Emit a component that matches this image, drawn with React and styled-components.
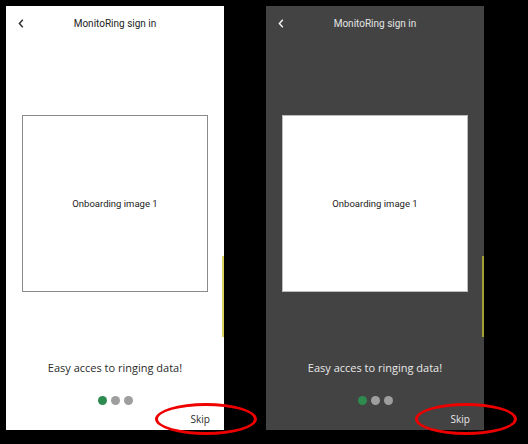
import React from 'react'
import styled, { createGlobalStyle } from 'styled-components'

const GlobalStyle = createGlobalStyle`
  html, body {
    margin: 0;
    padding: 0;
    background: #000;
  }
  body {
    width: 528px;
    height: 444px;
    overflow: hidden;
  }
`

const themes = {
  light: {
    bg: '#ffffff',
    title: '#222222',
    text: '#2a2a2a',
    chevron: '#333333',
    boxBg: '#ffffff',
    boxBorder: '#8a8a8a',
    boxText: '#222222',
    edge: 'rgba(205, 195, 40, 0.75)',
  },
  dark: {
    bg: '#434343',
    title: '#e4e4e4',
    text: '#e8e8e8',
    chevron: '#f0f0f0',
    boxBg: '#ffffff',
    boxBorder: '#bdbdbd',
    boxText: '#222222',
    edge: 'rgba(205, 195, 40, 0.7)',
  },
}

const Stage = styled.div`
  display: flex;
  gap: 42px;
  padding: 6px 0 0 6px;
  height: 444px;
  box-sizing: border-box;
`

const Phone = styled.div`
  position: relative;
  width: 218px;
  height: 424px;
  background: ${(p) => p.$t.bg};
  display: flex;
  flex-direction: column;
  align-items: center;
`

const Header = styled.div`
  width: 100%;
  height: 34px;
  display: grid;
  grid-template-columns: 30px 1fr 30px;
  align-items: center;
`

const Back = styled.svg`
  justify-self: start;
  margin-left: 12px;
  margin-top: 1px;
`

const Title = styled.div`
  text-align: center;
  font-family: Roboto, 'Liberation Sans', sans-serif;
  font-size: 10px;
  color: ${(p) => p.$t.title};
  margin-top: 1px;
`

const ImageBox = styled.div`
  margin-top: 75px;
  width: 186px;
  height: 177px;
  box-sizing: border-box;
  background: ${(p) => p.$t.boxBg};
  border: 1px solid ${(p) => p.$t.boxBorder};
  display: flex;
  align-items: center;
  justify-content: center;
  font-family: Roboto, 'Liberation Sans', sans-serif;
  font-size: 9.5px;
  color: ${(p) => p.$t.boxText};
`

const Caption = styled.div`
  margin-top: 68px;
  height: 16px;
  line-height: 16px;
  font-family: 'Open Sans', 'Noto Sans', sans-serif;
  font-size: 11px;
  color: ${(p) => p.$t.text};
`

const Dots = styled.div`
  margin-top: 20px;
  display: flex;
  gap: 4px;
`

const Dot = styled.span`
  width: 9px;
  height: 9px;
  border-radius: 50%;
  background: ${(p) => (p.$active ? '#2e8b4f' : '#9e9e9e')};
`

const SkipRow = styled.div`
  width: 100%;
  margin-top: 7px;
  display: flex;
  justify-content: flex-end;
  padding-right: 14px;
  box-sizing: border-box;
`

const Skip = styled.div`
  font-family: 'Open Sans', 'Noto Sans', sans-serif;
  font-size: 10px;
  line-height: 14px;
  color: ${(p) => p.$t.text};
`

const EdgeMark = styled.div`
  position: absolute;
  right: 0;
  top: 250px;
  width: 2px;
  height: 81px;
  background: ${(p) => p.$t.edge};
`

const Ring = styled.div`
  position: absolute;
  left: 149px;
  top: 397px;
  width: 96px;
  height: 26px;
  border: 3.5px solid #ee0000;
  border-radius: 50%;
  pointer-events: none;
`

function Screen({ mode }) {
  const t = themes[mode]
  return (
    <Phone $t={t}>
      <Header>
        <Back width="6" height="9" viewBox="0 0 6 9">
          <path d="M4.8 0.8 L1.4 4.5 L4.8 8.2" fill="none" stroke={t.chevron} strokeWidth="1.5" />
        </Back>
        <Title $t={t}>MonitoRing sign in</Title>
        <span />
      </Header>
      <ImageBox $t={t}>Onboarding image 1</ImageBox>
      <Caption $t={t}>Easy acces to ringing data!</Caption>
      <Dots>
        <Dot $active />
        <Dot />
        <Dot />
      </Dots>
      <SkipRow>
        <Skip $t={t}>Skip</Skip>
      </SkipRow>
      <EdgeMark $t={t} />
      <Ring />
    </Phone>
  )
}

export default function App() {
  return (
    <>
      <GlobalStyle />
      <Stage>
        <Screen mode="light" />
        <Screen mode="dark" />
      </Stage>
    </>
  )
}
